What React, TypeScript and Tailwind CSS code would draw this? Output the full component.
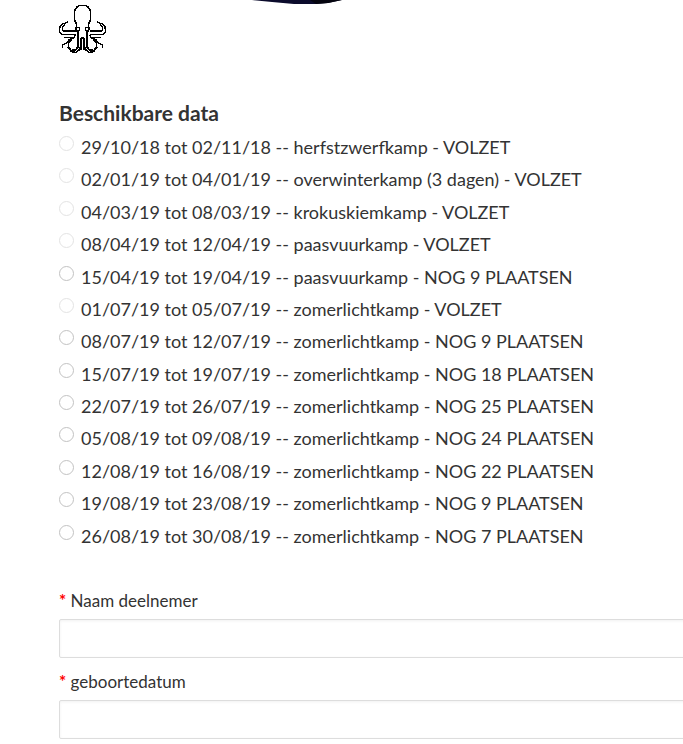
const dates = [
  { value: "29/10/18 tot 02/11/18 -- herfstzwerfkamp - VOLZET", full: true },
  { value: "02/01/19 tot 04/01/19 -- overwinterkamp (3 dagen) - VOLZET", full: true },
  { value: "04/03/19 tot 08/03/19 -- krokuskiemkamp - VOLZET", full: true },
  { value: "08/04/19 tot 12/04/19 -- paasvuurkamp - VOLZET", full: true },
  { value: "15/04/19 tot 19/04/19 -- paasvuurkamp - NOG 9 PLAATSEN", full: false },
  { value: "01/07/19 tot 05/07/19 -- zomerlichtkamp - VOLZET", full: true },
  { value: "08/07/19 tot 12/07/19 -- zomerlichtkamp - NOG 9 PLAATSEN", full: false },
  { value: "15/07/19 tot 19/07/19 -- zomerlichtkamp - NOG 18 PLAATSEN", full: false },
  { value: "22/07/19 tot 26/07/19 -- zomerlichtkamp - NOG 25 PLAATSEN", full: false },
  { value: "05/08/19 tot 09/08/19 -- zomerlichtkamp - NOG 24 PLAATSEN", full: false },
  { value: "12/08/19 tot 16/08/19 -- zomerlichtkamp - NOG 22 PLAATSEN", full: false },
  { value: "19/08/19 tot 23/08/19 -- zomerlichtkamp - NOG 9 PLAATSEN", full: false },
  { value: "26/08/19 tot 30/08/19 -- zomerlichtkamp - NOG 7 PLAATSEN", full: false },
];

function OctopusHalf() {
  return (
    <>
      <path d="M24 1.5H20L17.5 3.5L15.5 7V16L17.5 20V23" />
      <path d="M17.5 23L16.5 25L18.5 27.5L20.5 26V24L18.5 23" />
      <path d="M9 17.5L6 19.5H4L1.5 22L.5 25V28L3 30.5H16.5" />
      <path d="M6 20.5L3.5 23V26L5 27H16.5" />
      <path d="M16.5 31L14.5 34L10 36L7.5 39L3.5 41V44" />
      <path d="M5 33.5H14" />
      <path d="M12 36L9.5 39.5V43L12 47.5L17 48.5L20.5 45.5L21.5 42" />
      <path d="M9 43L12 46.5H16" strokeWidth="2" />
      <path d="M19 28V43L17 45.5H13" strokeWidth="2" />
      <path d="M22 46V35.5L23 33.5H24" strokeWidth="2" />
    </>
  );
}

function Logo() {
  return (
    <svg
      viewBox="0 0 48 50"
      className="h-[50px] w-12"
      fill="none"
      stroke="#000"
      strokeWidth="1.6"
      shapeRendering="crispEdges"
      aria-hidden="true"
    >
      <OctopusHalf />
      <g transform="translate(47 0) scale(-1 1)">
        <OctopusHalf />
      </g>
    </svg>
  );
}

function DateOption({ value, full }: { value: string; full: boolean }) {
  return (
    <label className="flex items-start gap-[7px]">
      <input
        type="radio"
        name="data"
        value={value}
        disabled={full}
        className="mt-[5px] size-[15px] shrink-0 appearance-none rounded-full border border-[#c2c2c2] bg-white checked:border-4 checked:border-[#333] disabled:border-[#e3e3e3]"
      />
      <span className="text-lg leading-8 whitespace-nowrap">{value}</span>
    </label>
  );
}

function TextField({ id, label }: { id: string; label: string }) {
  return (
    <div className="flex flex-col gap-[5px]">
      <label htmlFor={id} className="text-[17px] leading-[26px]">
        <span className="font-bold text-[#f00]">*</span> {label}
      </label>
      <input
        id={id}
        type="text"
        required
        className="h-[39px] w-full rounded-xs border border-[#ddd] bg-white px-3 text-base shadow-[inset_0_1px_3px_rgba(0,0,0,0.06)] outline-none"
      />
    </div>
  );
}

export default function App() {
  return (
    <div className="min-h-screen overflow-x-hidden bg-white font-['Lato',sans-serif] text-[#333]">
      <header className="relative pt-1 pl-[59px]">
        <svg
          viewBox="0 0 90 4"
          className="absolute top-0 left-[252px] h-1 w-[90px]"
          aria-hidden="true"
        >
          <path d="M0 0H90L76 3L64 4H42L20 2Z" fill="#0b0b2c" />
          <path d="M58 0H90L76 3L64 4Z" fill="#05050f" />
        </svg>
        <Logo />
      </header>
      <form className="pt-[45px] pb-1 pl-[59px]">
        <fieldset>
          <legend className="text-[21px] leading-7 font-bold">Beschikbare data</legend>
          <div className="mt-1 grid min-h-[421px] content-stretch">
            {dates.map((d) => (
              <DateOption key={d.value} {...d} />
            ))}
          </div>
        </fieldset>
        <div className="-mr-6 mt-9 flex flex-col gap-[11px]">
          <TextField id="naam-deelnemer" label="Naam deelnemer" />
          <TextField id="geboortedatum" label="geboortedatum" />
        </div>
      </form>
    </div>
  );
}
